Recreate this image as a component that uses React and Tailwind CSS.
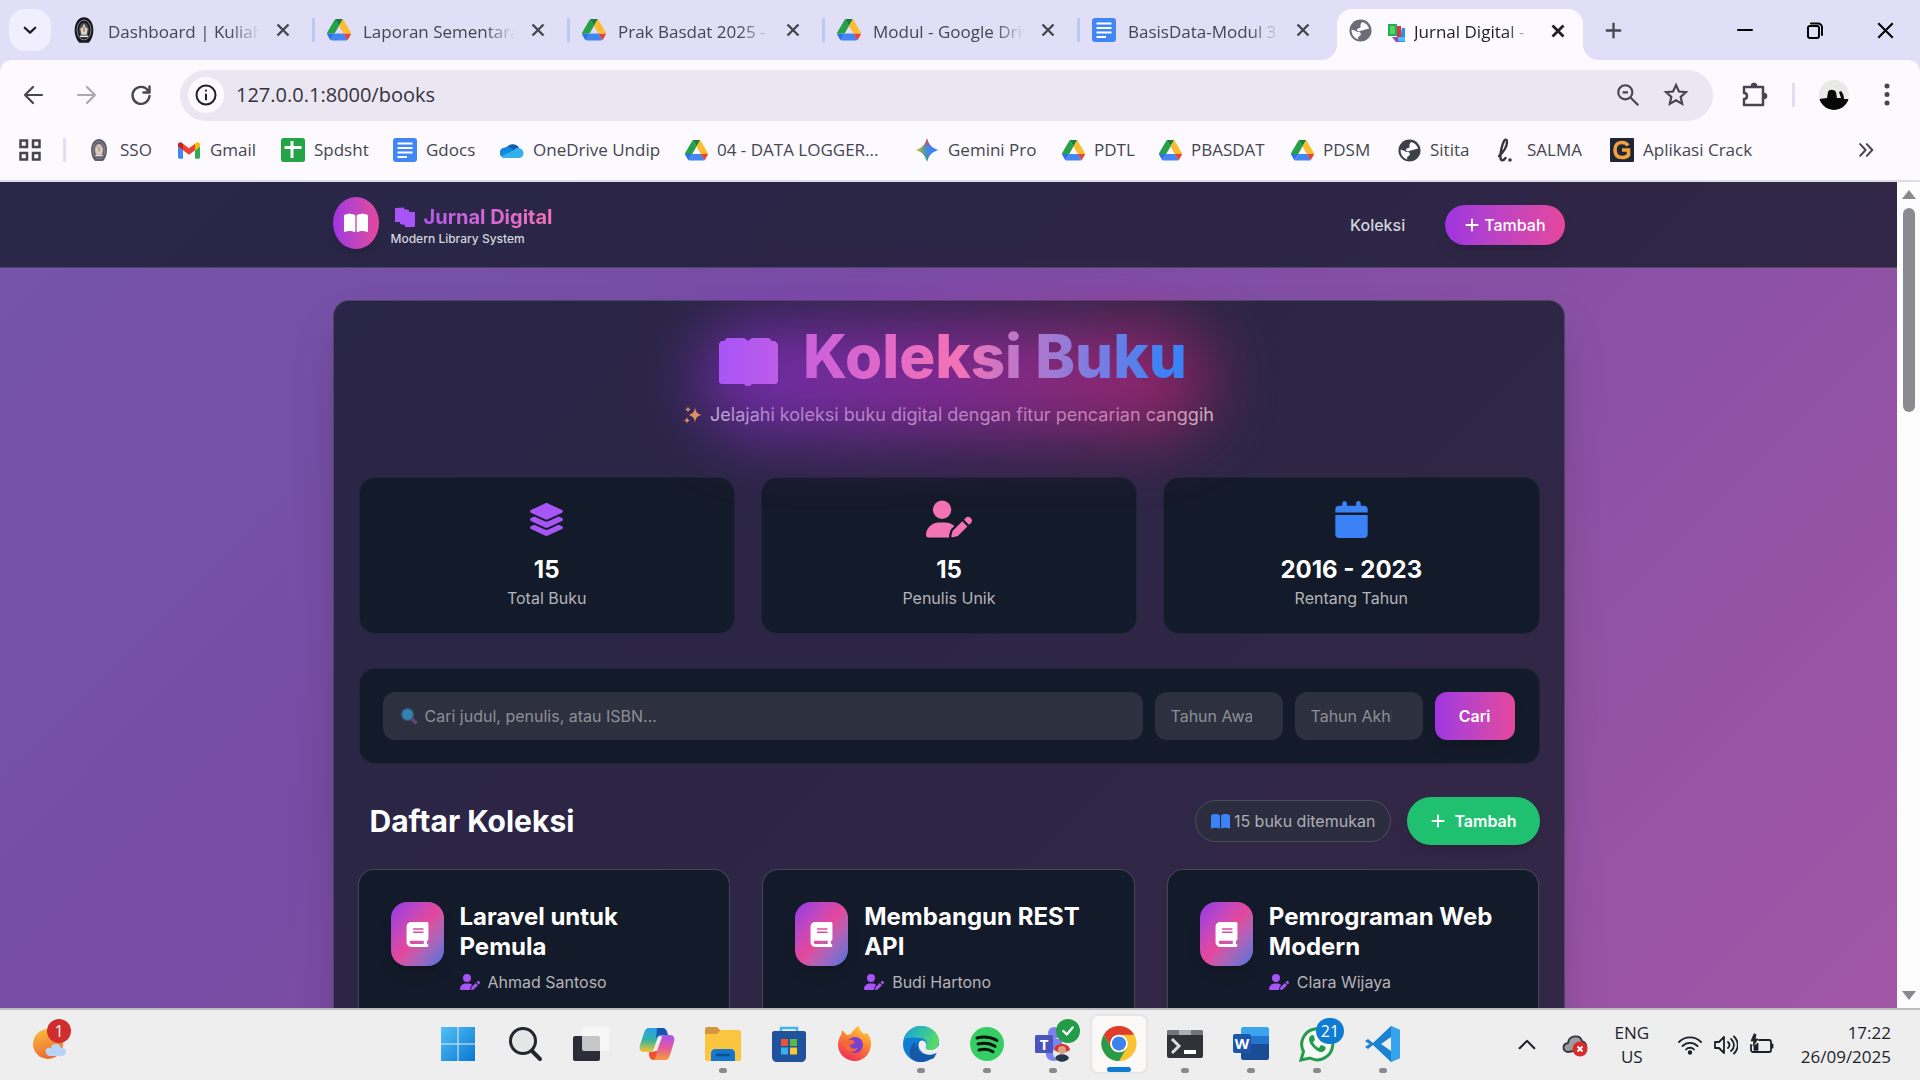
import React from "react";
import {
  FaBook,
  FaBookOpen,
  FaCalendar,
  FaLayerGroup,
  FaPlus,
  FaUserPen,
} from "react-icons/fa6";

/* ---------- Site and brand icons ---------- */

const Crest = ({ size = 28, light = false }) => (
  <svg width={size} height={size} viewBox="0 0 24 24" aria-hidden="true">
    <path d="M12 1c5 0 8 5 8 11 0 5-2 9-4 11H8c-2-2-4-6-4-11C4 6 7 1 12 1z" fill={light ? "#5b5d68" : "#17171c"} />
    <ellipse cx="12" cy="12" rx="6" ry="8.5" fill="none" stroke="#8f9099" strokeWidth="0.8" />
    <ellipse cx="12" cy="12" rx="4.3" ry="6.3" fill={light ? "#b9b3a9" : "#4a4a52"} />
    <path d="M12 6.5l1.4 3.2 1.8 1-1 5.3h-4.4l-1-5.3 1.8-1z" fill="#d6d3cc" />
    <path d="M12 9.5v4" stroke="#d08a45" strokeWidth="1.6" />
    <path d="M8.5 17.5h7" stroke="#e8e8ec" strokeWidth="1.3" />
  </svg>
);

const Drive = ({ size = 24 }) => (
  <svg width={size} height={size} viewBox="0 0 87.3 80" aria-hidden="true">
    <path d="m6.6 66.85 3.85 6.65c.8 1.4 1.95 2.5 3.3 3.3l13.75-23.8h-27.5c0 1.55.4 3.1 1.2 4.5z" fill="#2f6fe8" />
    <path d="m43.65 25-13.75-23.8c-1.35.8-2.5 1.9-3.3 3.3l-25.4 44a9.06 9.06 0 0 0-1.2 4.5h27.5z" fill="#26a148" />
    <path d="m73.55 76.8c1.35-.8 2.5-1.9 3.3-3.3l1.6-2.75 7.65-13.25c.8-1.4 1.2-2.95 1.2-4.5h-27.5l5.85 11.5z" fill="#ea4335" />
    <path d="m43.65 25 13.75-23.8c-1.35-.8-2.9-1.2-4.5-1.2h-18.5c-1.6 0-3.15.45-4.5 1.2z" fill="#188038" />
    <path d="m59.8 53h-32.3l-13.75 23.8c1.35.8 2.9 1.2 4.5 1.2h50.8c1.6 0 3.15-.45 4.5-1.2z" fill="#4285f4" />
    <path d="m73.4 26.5-12.7-22c-.8-1.4-1.95-2.5-3.3-3.3l-13.75 23.8 16.15 28h27.45c0-1.55-.4-3.1-1.2-4.5z" fill="#fbbc2f" />
  </svg>
);

const Docs = () => (
  <svg width="24" height="24" viewBox="0 0 24 24" aria-hidden="true">
    <rect width="24" height="24" rx="3" fill="#4285f4" />
    <path d="M4.5 5.5h15M4.5 10h15M4.5 14.5h15M4.5 19h9.5" stroke="#fff" strokeWidth="2" />
  </svg>
);

const Sheets = () => (
  <svg width="24" height="24" viewBox="0 0 24 24" aria-hidden="true">
    <rect width="24" height="24" rx="2.5" fill="#23a447" />
    <path d="M11 3v17M3.500 9.500h17" stroke="#fff" strokeWidth="3" />
  </svg>
);

const Gmail = () => (
  <svg width="22" height="17" viewBox="52 42 88 66" aria-hidden="true">
    <path fill="#4285f4" d="M58 108h14V74L52 59v43c0 3.320 2.690 6 6 6" />
    <path fill="#34a853" d="M120 108h14c3.320 0 6-2.690 6-6V59l-20 15" />
    <path fill="#fbbc04" d="M120 48v26l20-15v-8c0-7.420-8.470-11.650-14.400-7.200" />
    <path fill="#ea4335" d="M72 74V48l24 18 24-18v26L96 92" />
    <path fill="#c5221f" d="M52 51v8l20 15V48l-5.600-4.200c-5.940-4.450-14.400-.22-14.400 7.200" />
  </svg>
);

const Cloud = () => (
  <svg width="25" height="18" viewBox="0 0 24 16" aria-hidden="true">
    <path d="M6 7a7 6.500 0 0 1 13-1l-6 6z" fill="#0f5fae" />
    <path d="M5 5.500c2-1 5-.5 7 1.500l6 5-3 4H5A5 5 0 0 1 5 5.500z" fill="#1486dd" />
    <path d="M14 8c3-3.500 9-2 9.500 3 .3 3-2 5-4.500 5H5c-2 0-3-1-3.500-2z" fill="#35b0ee" />
  </svg>
);

const Gemini = () => (
  <svg width="24" height="24" viewBox="0 0 24 24" aria-hidden="true">
    <defs>
      <linearGradient id="gem" x1="0" y1="0.5" x2="1" y2="0.5">
        <stop offset="0" stopColor="#f9c22e" />
        <stop offset="0.35" stopColor="#5d9f8a" />
        <stop offset="0.55" stopColor="#4285f4" />
        <stop offset="1" stopColor="#3b7cf0" />
      </linearGradient>
      <linearGradient id="gemv" x1="0" y1="0" x2="0" y2="1">
        <stop offset="0" stopColor="#ee4136" />
        <stop offset="0.4" stopColor="#ee4136" stopOpacity="0" />
        <stop offset="0.65" stopColor="#20a95a" stopOpacity="0" />
        <stop offset="1" stopColor="#20a95a" />
      </linearGradient>
    </defs>
    <path d="M12 .5C14 7 17 10 23.500 12 17 14 14 17 12 23.500 10 17 7 14 .5 12 7 10 10 7 12 .5z" fill="url(#gem)" />
    <path d="M12 .5C14 7 17 10 23.500 12 17 14 14 17 12 23.500 10 17 7 14 .5 12 7 10 10 7 12 .5z" fill="url(#gemv)" />
  </svg>
);

const Globe = ({ color = "#3c4048", hole = "#fcf9ff" }) => (
  <svg width="23" height="23" viewBox="0 0 24 24" aria-hidden="true">
    <circle cx="12" cy="12" r="11.500" fill={color} />
    <path d="M14 3c3 1 6 3 7 7-1 0-2 1-4 1-1 0-2 1-4 1-1 0-1 1-3 1s-2-2-1-3 3 0 3-2 0-3 1-4 1-1 1-1z" fill={hole} />
    <path d="M2.700 11c2 1 4 1 5 2s3 0 4 1 1 3-1 4-1 2-1 3.300C5 20 2.500 16 2.700 11z" fill={hole} />
  </svg>
);

const Salma = () => (
  <svg width="22" height="26" viewBox="0 0 22 26" aria-hidden="true">
    <path d="M4 19c5-4 8-10 8-14 0-3-2-3-3-1-2 4-4 12-3.500 17 .5 3 3 3 5 0" fill="none" stroke="#34363f" strokeWidth="2.400" strokeLinecap="round" />
    <circle cx="15" cy="23" r="1.800" fill="#34363f" />
  </svg>
);

const Crack = () => (
  <svg width="24" height="24" viewBox="0 0 24 24" aria-hidden="true">
    <rect width="24" height="24" rx="1" fill="#202537" />
    <path d="M18 7.500C16.500 5 14.500 4.500 12 4.500c-5 0-7 3-7 7.500s2 7.500 7 7.500c3 0 5-.7 6.500-2.500v-5H12" fill="none" stroke="#f0a03c" strokeWidth="3.600" />
  </svg>
);

const BooksEmoji = () => (
  <svg width="18" height="20" viewBox="0 0 18 20" aria-hidden="true">
    <path d="M0 1l9 0v12l-9 0z" fill="#1fae50" />
    <path d="M2 3l5 0v8H2z" fill="#53d467" />
    <path d="M9 3l4 0 1 11-5 0z" fill="#d8324c" />
    <path d="M4 14l6 0 3 5-5 0z" fill="#8d4fc0" />
    <path d="M14 5l3 0v14h-5l1-4z" fill="#2f8de4" />
    <path d="M10 14h7v4h-7z" fill="#45c3f2" />
  </svg>
);

const line = { fill: "none", stroke: "currentColor", strokeLinecap: "round", strokeLinejoin: "round" };

const Icon = ({ size = 24, w = 2, children }) => (
  <svg width={size} height={size} viewBox="0 0 24 24" strokeWidth={w} {...line} aria-hidden="true">
    {children}
  </svg>
);

const CloseX = ({ size = 16, w = 2 }) => (
  <svg width={size} height={size} viewBox="0 0 16 16" strokeWidth={w} {...line} strokeLinecap="butt" aria-hidden="true">
    <path d="M2.500 2.500l11 11M13.500 2.500l-11 11" />
  </svg>
);

/* ---------- Browser chrome ---------- */

const tabs = [
  { icon: <Crest />, title: "Dashboard | Kuliah" },
  { icon: <Drive />, title: "Laporan Sementara" },
  { icon: <Drive />, title: "Prak Basdat 2025 - G" },
  { icon: <Drive />, title: "Modul - Google Drive" },
  { icon: <Docs />, title: "BasisData-Modul 3 -" },
];

const fade = "[mask-image:linear-gradient(to_right,black_80%,transparent)]";

function TabStrip() {
  return (
    <div className="flex h-15 items-stretch bg-[#e0dff7] text-[#45464f]">
      <button aria-label="Cari tab" className="mt-[9px] ml-[9px] flex h-[42px] w-[42px] items-center justify-center rounded-2xl bg-[#f1effd] text-[#1b1b22]">
        <Icon size={18} w={3}><path d="M5 9l7 6.500L19 9" /></Icon>
      </button>
      <div className="ml-[9px] flex">
        {tabs.map((t, i) => (
          <div key={t.title} className="flex w-[255px] items-center gap-[10px] pl-[10px]">
            <span className="flex w-7 justify-center">{t.icon}</span>
            <span className={`w-[152px] overflow-hidden pt-[3px] text-[17px] whitespace-nowrap ${fade}`}>{t.title}</span>
            <button aria-label={`Tutup ${t.title}`} className="ml-[3px] flex w-5 justify-center"><CloseX size={16} w={2.4} /></button>
            {i < 4 && <span className="ml-auto h-6 w-[3px] bg-[#b5cdf2]" />}
          </div>
        ))}
      </div>
      <div className="-ml-[14px] flex items-end">
        <span className="h-4 w-4 bg-[radial-gradient(circle_at_0_0,transparent_16px,#fcf9ff_16px)]" />
        <div className="flex h-[51px] w-[246px] items-center rounded-t-[15px] bg-[#fcf9ff] pb-2 pl-3 text-[#1f1f28]">
          <Globe color="#6a6c76" />
          <span className="ml-4 pt-1"><BooksEmoji /></span>
          <span className={`ml-2 w-[116px] overflow-hidden pt-[3px] text-[17px] whitespace-nowrap ${fade}`}>Jurnal Digital - K</span>
          <button aria-label="Tutup Jurnal Digital" className="ml-5"><CloseX size={16} w={2.8} /></button>
        </div>
        <span className="h-4 w-4 bg-[radial-gradient(circle_at_100%_0,transparent_16px,#fcf9ff_16px)]" />
      </div>
      <button aria-label="Tab baru" className="ml-[2px] flex w-6 items-center justify-center"><Icon size={23} w={2.4}><path d="M12 4v16M4 12h16" strokeLinecap="butt" /></Icon></button>
      <div className="ml-auto flex items-center text-black">
        <button aria-label="Minimalkan" className="flex w-[70px] justify-center"><svg width="17" height="17" viewBox="0 0 17 17" strokeWidth="2" {...line}><path d="M1 8h14" /></svg></button>
        <button aria-label="Pulihkan" className="flex w-[70px] justify-center">
          <svg width="17" height="17" viewBox="0 0 17 17" strokeWidth="2" {...line}><rect x="1" y="4" width="11" height="12" rx="2" /><path d="M4 1.500h7a4 4 0 0 1 4 4V13" /></svg>
        </button>
        <button aria-label="Tutup" className="flex w-[70px] justify-center"><CloseX size={21} w={1.6} /></button>
      </div>
    </div>
  );
}

function Toolbar() {
  return (
    <div className="bg-[#e0dff7]">
      <div className="flex h-[70px] items-center rounded-t-xl bg-[#fcf9ff] text-[#45464f]">
        <button aria-label="Kembali" className="ml-[21px]"><Icon w={2.200}><path d="M21 12H4M12 4l-8 8 8 8" /></Icon></button>
        <button aria-label="Maju" className="ml-[30px] text-[#a9a9b2]"><Icon w={2.200}><path d="M3 12h17M12 4l8 8-8 8" /></Icon></button>
        <button aria-label="Muat ulang" className="ml-[30px]"><Icon w={2.400}><path d="M19 7.500A8.500 8.500 0 1 0 20.500 13M20.500 3.500v6h-6" /></Icon></button>
        <div className="ml-[27px] flex h-[51px] min-w-0 flex-1 items-center rounded-full bg-[#eae7f2] pr-6 pl-2">
          <button aria-label="Informasi situs" className="flex h-9 w-9 items-center justify-center rounded-full bg-[#fcf9ff] text-[#1f1f28]">
            <Icon size={24}><circle cx="12" cy="12" r="9.500" /><path d="M12 11.500v5M12 7.500v.3" /></Icon>
          </button>
          <input aria-label="Alamat" defaultValue="127.0.0.1:8000/books" className="ml-3 min-w-0 flex-1 bg-transparent text-[20px] text-[#33333c] outline-none" />
          <button aria-label="Zoom"><Icon size={26}><circle cx="9.500" cy="9.500" r="6.500" /><path d="M14.500 14.500l7 7M7 9.500h5" strokeLinecap="butt" /></Icon></button>
          <button aria-label="Tandai halaman" className="ml-[22px]"><Icon size={26}><path d="M12 2.800l2.700 6 6.500.6-4.900 4.300 1.400 6.500L12 16.800l-5.700 3.400 1.400-6.500L2.800 9.400l6.500-.6z" strokeLinejoin="miter" /></Icon></button>
        </div>
        <button aria-label="Ekstensi" className="ml-[27px]">
          <svg width="28" height="28" viewBox="0 0 28 28" {...line} strokeWidth="2.500"><path d="M4 6h19v18H4v-6c4 0 4-6 0-6z" /><path d="M11 5a3 3 0 0 1 6 0zM24 12a3 3 0 0 1 0 6z" fill="currentColor" strokeWidth="1" /></svg>
        </button>
        <span className="ml-6 h-6 w-[3px] bg-[#dedff7]" />
        <button aria-label="Profil" className="ml-6">
          <svg width="30" height="30" viewBox="0 0 30 30"><defs><clipPath id="av"><circle cx="15" cy="15" r="15" /></clipPath></defs><g clipPath="url(#av)"><rect width="30" height="30" fill="#e9e9e7" /><path d="M0 19l8-1 1-6c1-3 6-3 8 0l1 6h4l-2-6 2-1c2 2 3 5 3 8l5 0v11H0z" fill="#080808" /></g></svg>
        </button>
        <button aria-label="Menu" className="mr-[21px] ml-[26px]"><svg width="24" height="28" viewBox="0 0 24 28" fill="currentColor"><circle cx="12" cy="5" r="2.500" /><circle cx="12" cy="13.500" r="2.500" /><circle cx="12" cy="22" r="2.500" /></svg></button>
      </div>
    </div>
  );
}

const bookmarks = [
  { icon: <Crest size={24} light />, label: "SSO", w: "w-[90px]" },
  { icon: <Gmail />, label: "Gmail", w: "w-[104px]" },
  { icon: <Sheets />, label: "Spdsht", w: "w-[112px]" },
  { icon: <Docs />, label: "Gdocs", w: "w-[107px]" },
  { icon: <Cloud />, label: "OneDrive Undip", w: "w-[184px]" },
  { icon: <Drive size={23} />, label: "04 - DATA LOGGER...", w: "w-[231px]" },
  { icon: <Gemini />, label: "Gemini Pro", w: "w-[146px]" },
  { icon: <Drive size={23} />, label: "PDTL", w: "w-[97px]" },
  { icon: <Drive size={23} />, label: "PBASDAT", w: "w-[132px]" },
  { icon: <Drive size={23} />, label: "PDSM", w: "w-[107px]" },
  { icon: <Globe />, label: "Sitita", w: "w-[97px]" },
  { icon: <Salma />, label: "SALMA", w: "w-[116px]" },
  { icon: <Crack />, label: "Aplikasi Crack", w: "w-[150px]" },
];

function BookmarksBar() {
  return (
    <div className="flex h-[52px] items-center border-b-2 border-[#dddce8] bg-[#fcf9ff] pb-[10px] text-[17px] text-[#45464f]">
      <button aria-label="Aplikasi" className="ml-[19px]">
        <svg width="22" height="22" viewBox="0 0 22 22" fill="none" stroke="currentColor" strokeWidth="2.500"><path d="M1.500 1.500h6.500v6.500H1.500zM14 1.500h6.500v6.500H14zM1.500 14h6.500v6.500H1.500zM14 14h6.500v6.500H14z" /></svg>
      </button>
      <span className="ml-[22px] h-6 w-[3px] bg-[#dedff7]" />
      <nav aria-label="Bookmark" className="ml-[21px] flex">
        {bookmarks.map((b) => (
          <a key={b.label} href="#" className={`flex items-center gap-[9px] whitespace-nowrap ${b.w}`}>
            <span className="flex w-6 shrink-0 justify-center">{b.icon}</span>
            {b.label}
          </a>
        ))}
      </nav>
      <button aria-label="Bookmark lainnya" className="mr-[44px] ml-auto"><Icon size={20} w={2.400}><path d="M5 5l6.500 7L5 19M13 5l6.500 7-6.500 7" /></Icon></button>
    </div>
  );
}

/* ---------- Jurnal Digital page ---------- */

function Navbar() {
  return (
    <header className="border-b border-white/15 bg-[#111827]/75">
      <div className="mx-auto flex h-[85px] max-w-[1232px] items-center justify-between">
        <a href="#" className="flex items-center gap-3 pb-1">
          <span className="flex h-[52px] w-[46px] items-center justify-center rounded-[50%] bg-linear-to-r from-[#9f33e0] to-[#e5469c] text-white shadow-lg">
            <FaBookOpen size={24} />
          </span>
          <span className="pt-1">
            <span className="flex items-center gap-[9px] pl-1 text-xl leading-7 font-bold">
              <svg width="20" height="20" viewBox="0 0 20 20" fill="#a855f7" aria-hidden="true"><path d="M0 1l9-.5V2l5 1v2h6v14l-1 1h-9v-2l-5-1v-2H0z" /></svg>
              <span className="bg-linear-to-r from-[#b35aec] to-[#f472b6] bg-clip-text text-transparent">Jurnal Digital</span>
            </span>
            <span className="block text-xs leading-4 font-medium text-gray-300">Modern Library System</span>
          </span>
        </a>
        <nav className="flex items-center gap-10 text-base">
          <a href="#" className="font-medium text-gray-300">Koleksi</a>
          <a href="#" className="flex h-10 items-center gap-1 rounded-full bg-linear-to-r from-[#9f33e0] to-[#e5469c] px-[19px] font-medium text-white shadow-lg">
            <FaPlus size={16} /> Tambah
          </a>
        </nav>
      </div>
    </header>
  );
}

function Hero() {
  return (
    <div className="relative text-center">
      <div className="absolute top-0 left-[29%] z-10 h-[110px] w-[43%] rounded-full bg-linear-to-r from-[#8b2fd8] via-[#a82bb5] to-[#c01f6c] opacity-70 blur-[34px]" />
      <h1 className="relative z-20 flex items-center justify-center gap-[25px] pl-2 text-6xl leading-14 font-extrabold">
        <svg width="59" height="50" viewBox="0 0 59 50" className="mt-[13px]" aria-hidden="true">
          <defs><linearGradient id="bk"><stop stopColor="#a855f7" /><stop offset="1" stopColor="#bd5ce8" /></linearGradient></defs>
          <path d="M0 7l2-3h3l3-3h17l4 3 4-3h17l3 3h3l3 3v38l-2 2H33l-2 2h-4l-2-2H2l-2-2z" fill="url(#bk)" />
        </svg>
        <span className="bg-[linear-gradient(to_right,#c95fdc,#f472b6_40%,#3b82f6_95%)] bg-clip-text text-transparent">Koleksi Buku</span>
      </h1>
      <p className="mt-[14px] flex items-center justify-center gap-2 text-lg leading-7 text-[#d1d1d4]">
        <svg width="18" height="18" viewBox="0 0 18 18" fill="#eba44c" aria-hidden="true"><path d="M11 1c.6 5 2 6.500 6.500 8-4.500 1.200-6 3-6.500 8-.6-5-2-6.800-6.500-8C9 7.500 10.400 6 11 1zM4 0c.3 2.300 1 3 3 3.500C5 4 4.300 4.700 4 7 3.700 4.700 3 4 1 3.500 3 3 3.700 2.300 4 0zM3 11c.3 2 1 3 3 3.500-2 .5-2.700 1.200-3 3.500-.3-2.300-1-3-3-3.500 2-.5 2.700-1.500 3-3.500z" /></svg>
        Jelajahi koleksi buku digital dengan fitur pencarian canggih
      </p>
    </div>
  );
}

const stats = [
  { icon: <FaLayerGroup size={37} color="#a855f7" />, value: "15", label: "Total Buku" },
  { icon: <FaUserPen size={46} color="#f472b6" />, value: "15", label: "Penulis Unik" },
  { icon: <FaCalendar size={37} color="#3b82f6" />, value: "2016 - 2023", label: "Rentang Tahun" },
];

function Stats() {
  return (
    <div className="mt-12 grid grid-cols-3 gap-[26px]">
      {stats.map((s) => (
        <div key={s.label} className="flex h-[157px] flex-col items-center rounded-2xl border border-white/5 bg-[#131a29] pt-[23px]">
          <span className="flex h-9 items-center">{s.icon}</span>
          <strong className="mt-[17px] text-2xl leading-8 font-bold text-white">{s.value}</strong>
          <span className="text-base leading-6 text-[#b4b5b9]">{s.label}</span>
        </div>
      ))}
    </div>
  );
}

const field = "h-12 rounded-xl bg-[#2d303e] px-4 text-base text-white placeholder-[#8d8f97] outline-none";

function SearchForm() {
  return (
    <form onSubmit={(e) => e.preventDefault()} className="mt-[34px] flex gap-3 rounded-2xl border border-white/5 bg-[#131a29] py-[23px] pr-6 pl-[23px]">
      <label className="relative flex min-w-0 flex-1">
        <svg className="absolute top-4 left-[18px]" width="16" height="16" viewBox="0 0 16 16" aria-hidden="true">
          <path d="M10 10l4.500 4.500" stroke="#66456e" strokeWidth="3.500" strokeLinecap="round" />
          <circle cx="6.500" cy="6.500" r="5.800" fill="#3482ad" stroke="#315a91" strokeWidth="1.300" />
        </svg>
        <input aria-label="Cari judul, penulis, atau ISBN" placeholder="Cari judul, penulis, atau ISBN..." className={`${field} w-full pl-[42px]`} />
      </label>
      <input type="number" aria-label="Tahun Awal" placeholder="Tahun Awal" className={`${field} w-32`} />
      <input type="number" aria-label="Tahun Akhir" placeholder="Tahun Akhir" className={`${field} w-32`} />
      <button className="h-12 w-20 rounded-xl bg-linear-to-r from-[#9f33e0] to-[#e5469c] text-base font-semibold text-white shadow-lg">Cari</button>
    </form>
  );
}

const books = [
  { title: "Laravel untuk Pemula", author: "Ahmad Santoso" },
  { title: "Membangun REST API", author: "Budi Hartono" },
  { title: "Pemrograman Web Modern", author: "Clara Wijaya" },
];

function Collection() {
  return (
    <section>
      <div className="mt-[33px] flex items-center justify-between pl-[11px]">
        <h2 className="text-3xl font-bold text-white">Daftar Koleksi</h2>
        <div className="flex items-center gap-4">
          <span className="flex h-[42px] items-center gap-1 rounded-full border border-white/15 bg-[#2b2d3f] px-[15px] text-base text-[#adaeb6]">
            <FaBookOpen size={19} color="#3b82f6" /> 15 buku ditemukan
          </span>
          <button className="flex h-12 items-center gap-2 rounded-full bg-[#1fc06f] px-[23px] text-base font-semibold text-white shadow-lg">
            <FaPlus size={16} /> Tambah
          </button>
        </div>
      </div>
      <div className="-ml-px mt-6 grid grid-cols-3 gap-8">
        {books.map((b) => (
          <article key={b.title} className="flex h-[260px] gap-4 rounded-2xl border border-white/20 bg-[#131a29] px-8 pt-8">
            <span className="flex h-16 w-[53px] shrink-0 items-center justify-center rounded-2xl bg-linear-to-br from-[#9333ea] via-[#e5469c] to-[#3b6fe0] text-white shadow-lg">
              <FaBook size={25} />
            </span>
            <div>
              <h3 className="text-2xl leading-[30px] font-bold text-white">{b.title}</h3>
              <p className="mt-2 flex items-center gap-2 text-base leading-6 text-[#b4b5b9]">
                <FaUserPen size={20} color="#a855f7" /> {b.author}
              </p>
            </div>
          </article>
        ))}
      </div>
    </section>
  );
}

function Page() {
  return (
    <div className="flex min-h-0 flex-1">
      <div className="min-w-0 flex-1 overflow-hidden bg-[linear-gradient(135deg,#7655ac_0%,#774ca4_35%,#a256a6_100%)] font-[Inter,sans-serif]">
        <Navbar />
        <main className="mx-auto mt-8 max-w-[1232px] rounded-2xl border border-white/15 bg-[#111827]/75 pt-[23px] pr-6 pl-[25px] shadow-2xl">
          <Hero />
          <Stats />
          <SearchForm />
          <Collection />
        </main>
      </div>
      <div className="flex w-[23px] flex-col items-center bg-[#fcfcfc] py-2">
        <svg width="16" height="10" viewBox="0 0 16 10" fill="#88888d" aria-hidden="true"><path d="M8 0l7 9H1z" /></svg>
        <span className="mt-2 h-[204px] w-3 rounded-full bg-[#8b8b8f]" />
        <svg className="mt-auto" width="16" height="10" viewBox="0 0 16 10" fill="#88888d" aria-hidden="true"><path d="M8 10L1 1h14z" /></svg>
      </div>
    </div>
  );
}

/* ---------- Taskbar ---------- */

const S = ({ children, size = 36 }) => (
  <svg width={size} height={size} viewBox="0 0 36 36" aria-hidden="true">{children}</svg>
);

const apps = [
  { name: "Start", art: <S><defs><linearGradient id="win" x1="0" y1="0" x2="1" y2="1"><stop stopColor="#53c0f5" /><stop offset="1" stopColor="#0878d4" /></linearGradient></defs><path d="M0 1h16.500v16.500H0zM17.500 1H34v16.500H17.500zM0 18.500h16.500V35H0zM17.500 18.500H34V35H17.500z" fill="url(#win)" /></S> },
  { name: "Telusuri", art: <S><circle cx="16" cy="15" r="12.500" fill="#e6e6e8" stroke="#23252f" strokeWidth="3" /><path d="M25 25l8 8" stroke="#23252f" strokeWidth="4" strokeLinecap="round" /></S> },
  { name: "Tampilan tugas", art: <S><rect x="0" y="10" width="27" height="25" rx="2" fill="#2c2d38" /><rect x="9" y="1" width="27" height="24" rx="2" fill="#fafafa" opacity="0.75" /></S> },
  {
    name: "Copilot",
    art: (
      <S>
        <defs>
          <linearGradient id="c1" x1="0" y1="0" x2="0" y2="1"><stop stopColor="#2ba0ec" /><stop offset="0.5" stopColor="#36b3a3" /><stop offset="1" stopColor="#f6c52c" /></linearGradient>
          <linearGradient id="c2" x1="0" y1="0" x2="0" y2="1"><stop stopColor="#a855f0" /><stop offset="0.5" stopColor="#e5589f" /><stop offset="1" stopColor="#f89a39" /></linearGradient>
        </defs>
        <path d="M10 2h13c3 0 4 3 5 7l-8 1-4 12c-1 3-2 4-5 4H5c-4 0-5-3-4-7L5 7c1-3 2-5 5-5z" fill="url(#c1)" />
        <path d="M18 2h6c3 0 4 3 5 7h-6c-3 0-5 1-6 4z" fill="#1a54b0" />
        <path d="M26 34H14c-3 0-4-3-4-7l6-2 5-12c1-3 2-4 5-4h5c4 0 5 3 4 7l-4 13c-1 3-2 5-5 5z" fill="url(#c2)" />
        <path d="M10 26h6l4-10 1 0-5 17c-4 2-6-2-6-7z" fill="#ee5230" />
        <path d="M19 11h4l-5 14h-4z" fill="#eeeeee" />
      </S>
    ),
  },
  { name: "File Explorer", run: true, art: <S><path d="M0 4c0-2 1-3 2-3h10l4 4-3 4H0z" fill="#d9953c" /><path d="M0 8h12l4-4h18c1 0 2 1 2 2v27c0 1-1 2-2 2H2c-1 0-2-1-2-2z" fill="#fbc540" /><path d="M6 35v-8c0-2 2-4 4-4h16c2 0 4 2 4 4v8z" fill="#1477cc" /><path d="M11 29h14" stroke="#0b4f91" strokeWidth="2.500" /></S> },
  { name: "Microsoft Store", art: <S><path d="M10 8V2h16v6" fill="none" stroke="#43b4ee" strokeWidth="2.500" /><path d="M1 7c0-1 1-2 2-2h30c1 0 2 1 2 2v24c0 3-2 5-5 5H6c-3 0-5-2-5-5z" fill="#20539b" /><path d="M10 13h7v7h-7z" fill="#ee5035" /><path d="M19 13h7v7h-7z" fill="#5cb947" /><path d="M10 21.500h7v7h-7z" fill="#38aeea" /><path d="M19 21.500h7v7h-7z" fill="#fbc832" /></S> },
  { name: "Firefox", art: <S><defs><linearGradient id="ff" x1="0.8" y1="0" x2="0.3" y2="1"><stop stopColor="#ffd43d" /><stop offset="0.5" stopColor="#fb7a32" /><stop offset="1" stopColor="#ee2d5b" /></linearGradient></defs><path d="M4 9l1-5 5 5 4-1c2-4 6-8 8-8 0 4 3 6 5 8l3-1c3 3 4 7 4 11 0 9-7 17-16 17S1 28 1 19c0-4 1-7 3-10z" fill="url(#ff)" /><circle cx="18" cy="19" r="8" fill="#7b3fd0" /><path d="M5 15c5 0 7-2 11-1l2 3-5 2c0 3 3 5 8 3-3 5-10 5-13-1z" fill="#f4693a" /></S> },
  { name: "Edge", run: true, art: <S><defs><linearGradient id="ed" x1="0" y1="0" x2="1" y2="0.3"><stop stopColor="#1f9fd8" /><stop offset="0.6" stopColor="#35c3a3" /><stop offset="1" stopColor="#55d968" /></linearGradient></defs><circle cx="18" cy="18" r="18" fill="#0f7cd4" /><path d="M1 14C4 5 10 0 18 0c10 0 18 7 18 15 0 6-4 9-9 9-4 0-5-2-4-4 2-4-1-8-6-8-7-1-13-1-16 2z" fill="url(#ed)" /><path d="M12 20c1 8 7 13 14 13-5 4-12 4-17 0-4-4-3-12 3-17z" fill="#1757a8" /><path d="M17 14c-4 4-3 11 3 14 5 2 10 1 14-2l-3 6c-7 4-15 1-18-6-1-5 0-9 4-12z" fill="#1757a8" /><path d="M17 15c4-2 7 2 6 5-1 3 1 4 4 4 4 0 7-2 9-5v6c-5 5-14 5-18 0-3-3-3-8-1-10z" fill="#eeeeee" /></S> },
  { name: "Spotify", run: true, art: <S><circle cx="18" cy="18" r="17" fill="#34cf62" /><path d="M8 12c7-2 14-1 20 2.500M9 18c6-1.500 12-1 17 2.300M10 24c5-1.300 10-.8 14 1.800" fill="none" stroke="#0c130f" strokeWidth="3" strokeLinecap="round" /></S> },
  { name: "Teams", run: true, art: <S><circle cx="19" cy="7" r="6" fill="#7b83eb" /><circle cx="29" cy="10" r="4" fill="#5059c9" /><path d="M11 13h16v15c0 4-3 7-8 7s-8-3-8-7z" fill="#7b83eb" /><rect x="0" y="9" width="18" height="18" rx="1.500" fill="#4b53bc" /><text x="9" y="24" fill="#fff" fontSize="15" fontWeight="700" textAnchor="middle">T</text><circle cx="27" cy="27" r="9" fill="#e6e8ef" /><path d="M19 24c1-8 15-8 16 0l-4 2h-8z" fill="#d7342f" /><circle cx="27" cy="24" r="4" fill="#d9a381" /><path d="M20 32c2-5 12-5 14 0-3 5-11 5-14 0z" fill="#26354a" /></S>, badge: "check" },
  { name: "Chrome", active: true, art: <S><circle cx="18" cy="18" r="18" fill="#fbc330" /><path d="M2.400 9A18 18 0 0 1 33.600 9H18a9 9 0 0 0-7.800 13.500z" fill="#df3b2f" /><path d="M2.400 9l7.800 13.500A9 9 0 0 0 25.800 22.500L18 36A18 18 0 0 1 2.400 9z" fill="#289a48" /><circle cx="18" cy="18" r="9" fill="#fff" /><circle cx="18" cy="18" r="7.300" fill="#3b83ee" /></S> },
  { name: "Terminal", run: true, art: <S><rect x="0" y="4" width="36" height="28" rx="2" fill="#303139" /><path d="M0 9V6c0-1 1-2 2-2h32c1 0 2 1 2 2v3z" fill="#73747c" /><path d="M12 4h12v5H12z" fill="#aeafb5" /><path d="M5 13l7 7-7 7" fill="none" stroke="#dcdce0" strokeWidth="3" /><path d="M17 26h12" stroke="#fff" strokeWidth="4" /></S> },
  { name: "Word", run: true, art: <S><path d="M8 3c0-1 1-2 2-2h24c1 0 2 1 2 2v8H8z" fill="#3aa5ec" /><path d="M8 10h28v9H8z" fill="#2274cc" /><path d="M8 18h28v14c0 1-1 2-2 2H10c-1 0-2-1-2-2z" fill="#1b4c96" /><rect x="0" y="8" width="18" height="19" rx="2" fill="#1b55ac" /><text x="9" y="23" fill="#fff" fontSize="15" fontWeight="700" textAnchor="middle">W</text></S> },
  { name: "WhatsApp", run: true, art: <S><path d="M2 34l2.500-8.500A15.500 15.500 0 1 1 11 32z" fill="#f7f9f7" stroke="#239b4c" strokeWidth="3" /><path d="M13 9c-4 2-4 6 0 11 5 6 10 8 13 4 1-2 1-3-1-4l-3-1-2 3c-3-1-5-4-6-6l2-2-1-4c-1-1-1-1-2-1z" fill="#239b4c" /></S>, badge: "21" },
  { name: "VS Code", run: true, art: <S><path d="M26 0l9 4v28l-9 4L8 19 3 23l-3-2 4.500-3L0 15l3-2 5 4z" fill="#1b83d2" /><path d="M26 0l9 4v28l-9 4z" fill="#35a4ec" /><path d="M26 11v14l-10-7z" fill="#eeeeee" /></S> },
];

function Taskbar() {
  return (
    <footer className="flex h-18 items-stretch border-t-2 border-[#bcbcbe] bg-[#eeeeee] text-[#1d1f2a]">
      <div className="w-[426px] shrink-0 pt-[9px] pl-8">
        <button aria-label="Cuaca, 1 notifikasi" className="relative block">
          <svg width="40" height="42" viewBox="0 0 40 42" aria-hidden="true">
            <defs><linearGradient id="sun" x1="0" y1="0" x2="0.3" y2="1"><stop stopColor="#fac23c" /><stop offset="1" stopColor="#ee6d34" /></linearGradient></defs>
            <circle cx="16" cy="25" r="15" fill="url(#sun)" />
            <path d="M14 34c-2-4 2-6 5-5 1-6 9-5 10 0 6-1 7 7 1 8H18c-2 0-3-1-4-3z" fill="#b9d3f5" />
          </svg>
          <span className="absolute top-0 left-[15px] flex h-6 w-6 items-center justify-center rounded-full bg-[#d12c2e] text-base text-white">1</span>
        </button>
      </div>
      <div className="flex">
        {apps.map((a) => (
          <div key={a.name} className="flex w-[66px] justify-center">
            <button aria-label={a.name} className={`relative mt-1 flex h-[60px] w-[58px] flex-col items-center rounded-lg ${a.active ? "border-2 border-[#e6e6e6] bg-[#faf9f8] pt-[10px]" : "pt-3"}`}>
              {a.art}
              {a.run && <span className="mt-[6px] h-[5px] w-2 rounded-full bg-[#88888d]" />}
              {a.active && <span className="mt-[6px] h-[5px] w-6 rounded-full bg-[#0f7cd4]" />}
              {a.badge === "check" && (
                <span className="absolute top-[5px] left-8 flex h-6 w-6 items-center justify-center rounded-full bg-[#249b47] text-white"><Icon size={14} w={4}><path d="M4 12l6 6L20 6" /></Icon></span>
              )}
              {a.badge === "21" && (
                <span className="absolute top-1 left-7 flex h-[26px] w-[28px] items-center justify-center rounded-full bg-[#0f7cd4] text-base text-white">21</span>
              )}
            </button>
          </div>
        ))}
      </div>
      <div className="ml-auto flex items-center pr-[29px] text-[17px] leading-6">
        <button aria-label="Ikon tersembunyi"><Icon size={22} w={2.300}><path d="M4 15.500l8-8 8 8" /></Icon></button>
        <button aria-label="OneDrive" className="ml-6">
          <svg width="26" height="24" viewBox="0 0 26 24"><path d="M6 19c-6-1-6-8 0-9 1-8 12-9 14-2 4 1 5 5 4 8z" fill="#9b9ba0" stroke="#33343c" strokeWidth="1.800" /><circle cx="18" cy="16" r="7.500" fill="#d92b2f" /><path d="M15.500 13.500l5 5M20.500 13.500l-5 5" stroke="#fff" strokeWidth="1.800" /></svg>
        </button>
        <button className="ml-6 w-10 text-center">ENG US</button>
        <button aria-label="Jaringan, suara, baterai" className="ml-[26px] flex gap-3">
          <Icon size={24} w={1.800}><path d="M1 9a15.500 15.500 0 0 1 22 0M4.500 13a10.500 10.500 0 0 1 15 0M8 16.500a5.500 5.500 0 0 1 8 0" /><circle cx="12" cy="19.500" r="1.300" fill="currentColor" /></Icon>
          <Icon size={24} w={1.800}><path d="M1 9h4l5-5v16l-5-5H1zM14 9c2 2 2 4 0 6M17 6c4 3.500 4 8.500 0 12M20 3.500c5 5 5 12 0 17" /></Icon>
          <Icon size={24} w={1.800}><path d="M9 7h10a2 2 0 0 1 2 2v8a2 2 0 0 1-2 2H3a2 2 0 0 1-2-2v-5M22.500 11.500v3" /><path d="M4 1L1 8h3l-1 5 5-7H5l1-4zM4 17v-4l4-3v7z" fill="currentColor" strokeWidth="0.800" /></Icon>
        </button>
        <button className="ml-[27px] text-right whitespace-nowrap">17:22<br />26/09/2025</button>
      </div>
    </footer>
  );
}

export default function App() {
  return (
    <div className="flex h-screen flex-col overflow-hidden font-['Open_Sans','Noto_Sans',sans-serif]">
      <TabStrip />
      <Toolbar />
      <BookmarksBar />
      <Page />
      <Taskbar />
    </div>
  );
}
